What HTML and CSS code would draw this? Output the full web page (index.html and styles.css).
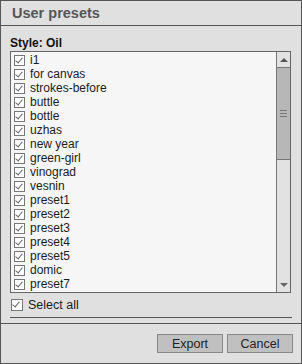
FILE: index.html
```html
<!DOCTYPE html>
<html lang="en">
<head>
    <meta charset="UTF-8">
    <meta name="viewport" content="width=device-width, initial-scale=1.0">
    <title>User presets</title>
    <link rel="stylesheet" href="styles.css">
</head>
<body>
    <div class="dialog">
        <!-- Title bar -->
        <div class="title">User presets</div>

        <div class="body">
            <div class="style-label">Style: Oil</div>

            <!-- Preset list with fake scrollbar -->
            <div class="listbox">
                <ul class="items">
                    <li><span class="check"></span>i1</li>
                    <li><span class="check"></span>for canvas</li>
                    <li><span class="check"></span>strokes-before</li>
                    <li><span class="check"></span>buttle</li>
                    <li><span class="check"></span>bottle</li>
                    <li><span class="check"></span>uzhas</li>
                    <li><span class="check"></span>new year</li>
                    <li><span class="check"></span>green-girl</li>
                    <li><span class="check"></span>vinograd</li>
                    <li><span class="check"></span>vesnin</li>
                    <li><span class="check"></span>preset1</li>
                    <li><span class="check"></span>preset2</li>
                    <li><span class="check"></span>preset3</li>
                    <li><span class="check"></span>preset4</li>
                    <li><span class="check"></span>preset5</li>
                    <li><span class="check"></span>domic</li>
                    <li><span class="check"></span>preset7</li>
                </ul>
                <div class="scrollbar">
                    <div class="sb-btn"><span class="arrow-up"></span></div>
                    <div class="sb-thumb"><span class="grip"></span></div>
                    <div class="sb-track"></div>
                    <div class="sb-btn sb-down"><span class="arrow-down"></span></div>
                </div>
            </div>

            <label class="select-all"><span class="check"></span>Select all</label>
            <div class="rule"></div>
        </div>

        <!-- Buttons -->
        <div class="footer">
            <button class="btn">Export</button>
            <button class="btn">Cancel</button>
        </div>
    </div>
</body>
</html>
```

FILE: styles.css
```css
/* Base */
html, body {
    margin: 0;
    padding: 0;
    background-color: #e0e0e0;
    font-family: "Liberation Sans", Arial, sans-serif;
    font-size: 12px;
    color: #1c1c1c;
}

.dialog {
    box-sizing: border-box;
    width: 302px;
    height: 364px;
    border: 1px solid #555;
    display: flex;
    flex-direction: column;
}

.title {
    height: 24px;
    line-height: 24px;
    padding-left: 11px;
    font-size: 14.5px;
    font-weight: bold;
    color: #555;
    border-bottom: 1px solid #555;
}

.body {
    padding: 0 8px 0 9px;
    height: 297px;
}

.style-label {
    font-weight: bold;
    color: #111;
    padding-top: 10px;
    height: 15px;
    line-height: 15px;
}

/* List */
.listbox {
    box-sizing: border-box;
    height: 242px;
    width: 281px;
    border: 1px solid #666;
    background-color: #f6f6f6;
    display: flex;
    overflow: hidden;
}

.items {
    list-style: none;
    margin: 0;
    padding: 1px 0 0 3px;
    flex: 1;
    overflow: hidden;
}

.items li {
    height: 14px;
    line-height: 14px;
    display: flex;
    align-items: center;
    white-space: nowrap;
}

.check {
    box-sizing: border-box;
    width: 11px;
    height: 11px;
    border: 1px solid #777;
    background-color: #fff;
    margin-right: 5px;
    flex: none;
    position: relative;
}

.check::after {
    content: "";
    position: absolute;
    left: 2px;
    top: 0px;
    width: 3px;
    height: 6px;
    border-right: 1px solid #666;
    border-bottom: 1px solid #666;
    transform: rotate(40deg);
}

/* Scrollbar */
.scrollbar {
    box-sizing: border-box;
    width: 14px;
    border-left: 1px solid #777;
    background-color: #e2e2e2;
    display: flex;
    flex-direction: column;
}

.sb-btn {
    height: 15px;
    display: flex;
    align-items: center;
    justify-content: center;
    border-bottom: 1px solid #777;
}

.sb-down {
    border-bottom: none;
    height: 14px;
}

.arrow-up {
    width: 0;
    height: 0;
    border-left: 4px solid transparent;
    border-right: 4px solid transparent;
    border-bottom: 4px solid #555;
}

.arrow-down {
    width: 0;
    height: 0;
    border-left: 4px solid transparent;
    border-right: 4px solid transparent;
    border-top: 4px solid #666;
}

.sb-thumb {
    box-sizing: border-box;
    height: 92px;
    background-color: #b7b7b7;
    border-bottom: 1px solid #777;
    display: flex;
    align-items: center;
    justify-content: center;
}

.grip {
    width: 7px;
    height: 5px;
    border-top: 1px solid #777;
    border-bottom: 1px solid #777;
    position: relative;
}

.grip::after {
    content: "";
    position: absolute;
    left: 0;
    right: 0;
    top: 2px;
    border-top: 1px solid #777;
}

.sb-track {
    flex: 1;
}

/* Select all */
.select-all {
    display: flex;
    align-items: center;
    height: 24px;
    padding-left: 1px;
    font-size: 12.5px;
}

.select-all .check {
    width: 12px;
    height: 12px;
    margin-right: 5px;
}

.rule {
    width: 282px;
    border-top: 1px solid #555;
}

/* Footer */
.footer {
    flex: 1;
    border-top: 1px solid #555;
    display: flex;
    justify-content: flex-end;
    gap: 4px;
    padding: 10px 8px 0 0;
}

.btn {
    width: 66px;
    height: 19px;
    padding: 0;
    background-color: #c0c0c0;
    border: 1px solid #888;
    font-family: "Liberation Sans", Arial, sans-serif;
    font-size: 12.5px;
    color: #222;
}
```
